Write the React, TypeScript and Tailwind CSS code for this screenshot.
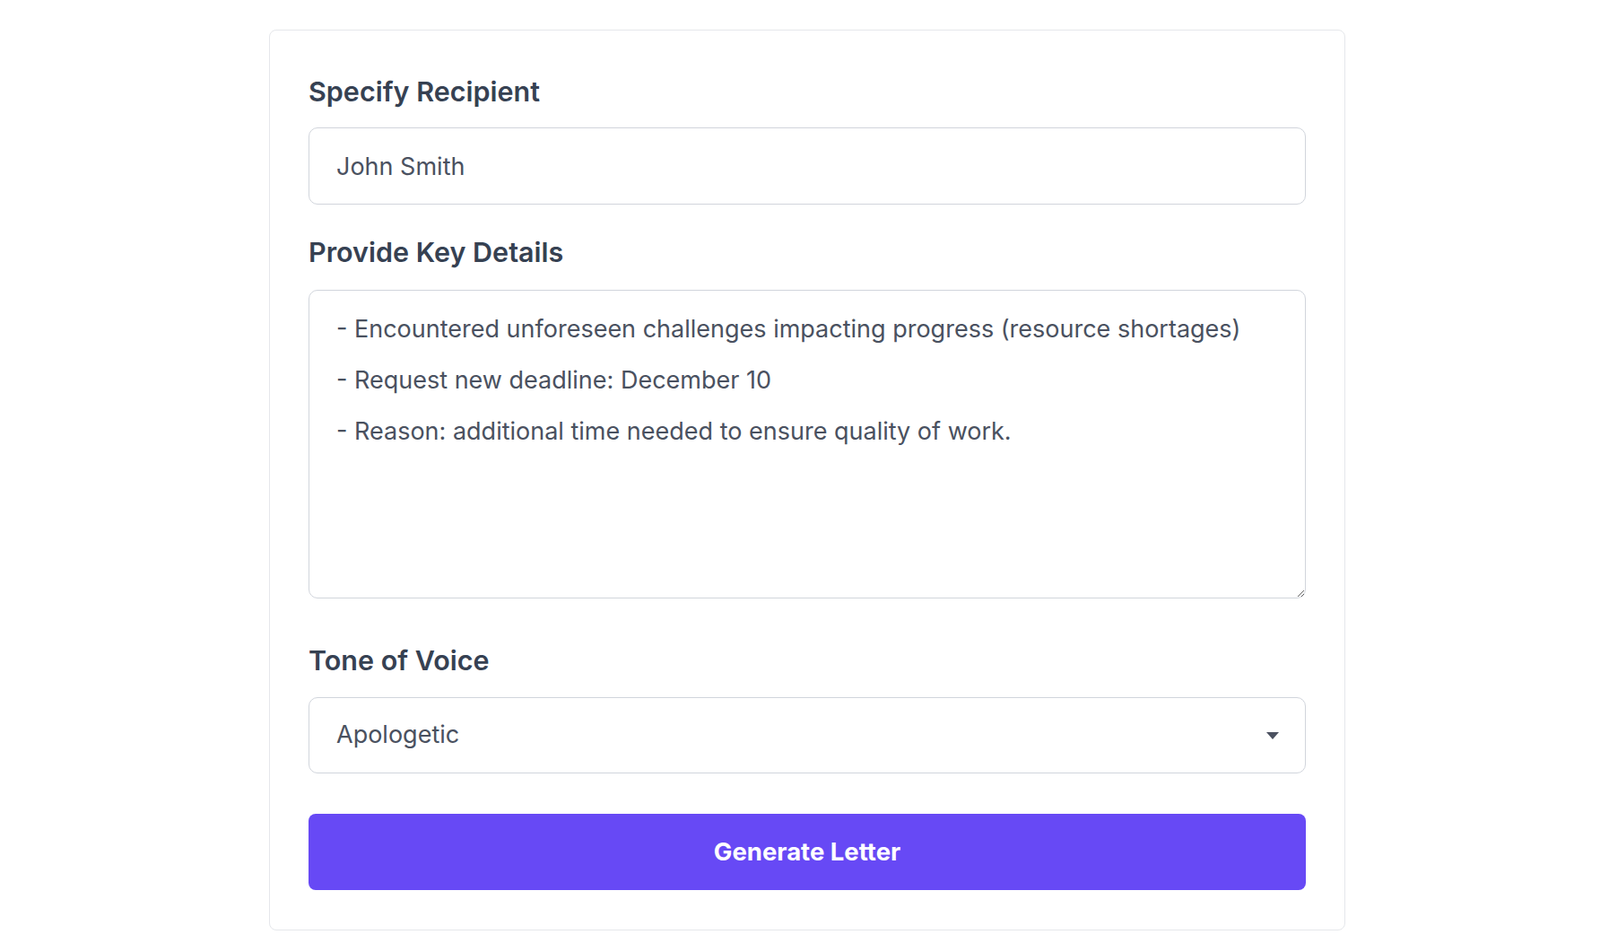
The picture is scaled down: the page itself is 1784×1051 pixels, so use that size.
import React, { useState } from 'react';

const TONES = ['Apologetic', 'Formal', 'Friendly', 'Persuasive'];

const DETAILS = [
    '- Encountered unforeseen challenges impacting progress (resource shortages)',
    '- Request new deadline: December 10',
    '- Reason: additional time needed to ensure quality of work.',
].join('\n');

const App = () => {
    const [recipient, setRecipient] = useState('John Smith');
    const [details, setDetails] = useState(DETAILS);
    const [tone, setTone] = useState('Apologetic');

    return (
        <div className="min-h-screen bg-white pt-[33px] font-['Inter',sans-serif]">
            <div className="ml-[300px] w-[1200px] rounded-lg border border-gray-200 bg-white px-[43px] pt-[50px] pb-[44px]">
                <label className="mb-[22px] block text-[30.5px] leading-[36px] font-semibold text-[#364152]">
                    Specify Recipient
                </label>
                <input
                    type="text"
                    value={recipient}
                    onChange={e => setRecipient(e.target.value)}
                    className="block h-[86px] w-full rounded-[10px] border border-gray-300 px-[30px] text-[27px] text-[#4a5160] outline-none"
                />

                <label className="mt-[35px] mb-[24px] block text-[30.5px] leading-[36px] font-semibold text-[#364152]">
                    Provide Key Details
                </label>
                <textarea
                    value={details}
                    onChange={e => setDetails(e.target.value)}
                    className="block h-[344px] w-full rounded-[10px] border border-gray-300 px-[30px] pt-[14px] text-[27px] leading-[57px] text-[#4a5160] outline-none"
                />

                <label className="mt-[51px] mb-[23px] block text-[30.5px] leading-[36px] font-semibold text-[#364152]">
                    Tone of Voice
                </label>
                <div className="relative">
                    <select
                        value={tone}
                        onChange={e => setTone(e.target.value)}
                        className="block h-[85px] w-full appearance-none rounded-[10px] border border-gray-300 bg-white px-[30px] text-[27px] text-[#4a5160] outline-none"
                    >
                        {TONES.map(t => (
                            <option key={t} value={t}>{t}</option>
                        ))}
                    </select>
                    <svg
                        className="pointer-events-none absolute top-1/2 right-[30px] -translate-y-1/2"
                        width="14"
                        height="8"
                        viewBox="0 0 14 8"
                    >
                        <path d="M0 0h14L7 8z" fill="#4b5160" />
                    </svg>
                </div>

                <button className="mt-[45px] block h-[85px] w-full rounded-lg bg-[#6749f5] text-[27.5px] font-bold text-white">
                    Generate Letter
                </button>
            </div>
        </div>
    );
};

export default App;
